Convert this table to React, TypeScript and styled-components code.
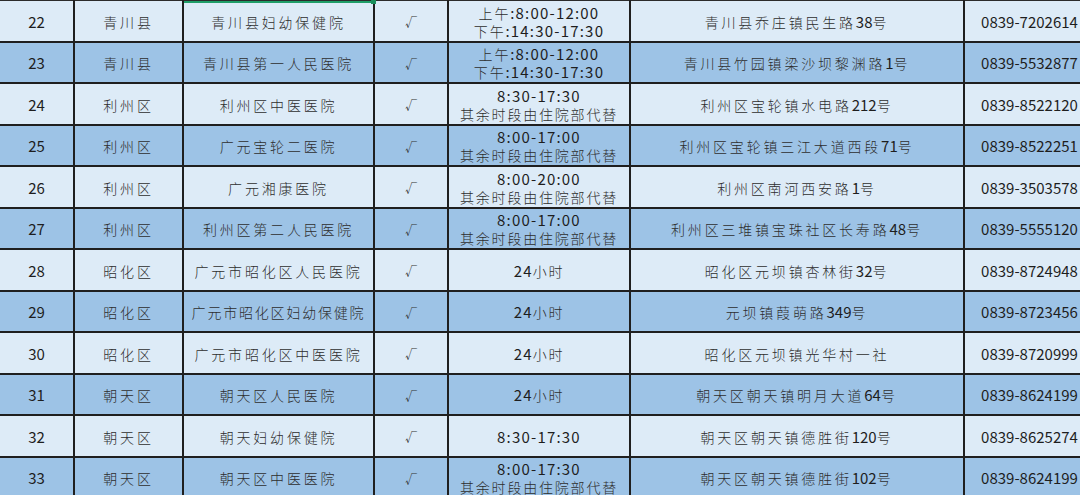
import React from 'react';
import styled, { createGlobalStyle } from 'styled-components';

const GlobalStyle = createGlobalStyle`
  html, body {
    margin: 0;
    padding: 0;
    overflow: hidden;
    background: #ddebf7;
  }
  body {
    font-family: "Noto Sans CJK SC", "Liberation Sans", sans-serif;
  }
`;

const Sheet = styled.div`
  width: 1080px;
  height: 495px;
  overflow: hidden;
`;

const Table = styled.table`
  border-collapse: collapse;
  table-layout: fixed;
  width: 1096px;
  margin-left: -2px;
  margin-top: -1px;
`;

const Row = styled.tr<{ $shade: boolean }>`
  height: 41.5px;
  background: ${(p) => (p.$shade ? '#9dc3e6' : '#ddebf7')};
`;

const Cell = styled.td<{ $selected?: boolean }>`
  position: relative;
  padding: 2px 0 0;
  border: 2px solid #1f1f1f;
  border-top-color: #2b2b2b;
  text-align: center;
  vertical-align: middle;
  white-space: nowrap;
  overflow: hidden;
  color: #1e1e1e;
  font-size: 15px;
  line-height: 18px;

  ${(p) =>
    p.$selected &&
    `
    overflow: visible;
    &::before {
      content: '';
      position: absolute;
      left: 0;
      right: 0;
      top: 0;
      height: 2px;
      background: #1f9e68;
    }
    &::after {
      content: '';
      position: absolute;
      right: -3px;
      top: -1px;
      width: 5px;
      height: 4px;
      background: #1a8f5c;
    }
  `}
`;

const TimeCell = styled(Cell)`
  letter-spacing: 1.2px;
`;

const TimeLine = styled.div`
  height: 18px;
  line-height: 18px;
`;

const Han = styled.span<{ $tight?: boolean }>`
  font-size: 14px;
  font-weight: 300;
  letter-spacing: ${(p) => (p.$tight ? '1.8px' : '2.8px')};
  color: #2e2e2e;
`;

const Check = styled.span`
  font-size: 12px;
  color: #333;
`;

const Txt: React.FC<{ text: string; tight?: boolean }> = ({ text, tight }) => (
  <>
    {text.split(/([\u4e00-\u9fff]+)/).map((part, i) =>
      /[\u4e00-\u9fff]/.test(part) ? (
        <Han key={i} $tight={tight}>
          {part}
        </Han>
      ) : (
        part
      )
    )}
  </>
);

const AM = ['上午:8:00-12:00', '下午:14:30-17:30'];
const rest = (t: string) => [t, '其余时段由住院部代替'];

const rows: [number, string, string, string[], string, string][] = [
  [22, '青川县', '青川县妇幼保健院', AM, '青川县乔庄镇民生路38号', '0839-7202614'],
  [23, '青川县', '青川县第一人民医院', AM, '青川县竹园镇梁沙坝黎渊路1号', '0839-5532877'],
  [24, '利州区', '利州区中医医院', rest('8:30-17:30'), '利州区宝轮镇水电路212号', '0839-8522120'],
  [25, '利州区', '广元宝轮二医院', rest('8:00-17:00'), '利州区宝轮镇三江大道西段71号', '0839-8522251'],
  [26, '利州区', '广元湘康医院', rest('8:00-20:00'), '利州区南河西安路1号', '0839-3503578'],
  [27, '利州区', '利州区第二人民医院', rest('8:00-17:00'), '利州区三堆镇宝珠社区长寿路48号', '0839-5555120'],
  [28, '昭化区', '广元市昭化区人民医院', ['24小时'], '昭化区元坝镇杏林街32号', '0839-8724948'],
  [29, '昭化区', '广元市昭化区妇幼保健院', ['24小时'], '元坝镇葭萌路349号', '0839-8723456'],
  [30, '昭化区', '广元市昭化区中医医院', ['24小时'], '昭化区元坝镇光华村一社', '0839-8720999'],
  [31, '朝天区', '朝天区人民医院', ['24小时'], '朝天区朝天镇明月大道64号', '0839-8624199'],
  [32, '朝天区', '朝天妇幼保健院', ['8:30-17:30'], '朝天区朝天镇德胜街120号', '0839-8625274'],
  [33, '朝天区', '朝天区中医医院', rest('8:00-17:30'), '朝天区朝天镇德胜街102号', '0839-8624199'],
];

const widths = [75, 109, 191, 74, 182, 334, 131];

const App: React.FC = () => (
  <>
    <GlobalStyle />
    <Sheet>
      <Table>
        <colgroup>
          {widths.map((w, i) => (
            <col key={i} style={{ width: w }} />
          ))}
        </colgroup>
        <tbody>
          {rows.map(([no, area, name, hours, addr, phone], idx) => (
            <Row key={no} $shade={idx % 2 === 1}>
              <Cell>{no}</Cell>
              <Cell>
                <Txt text={area} />
              </Cell>
              <Cell $selected={idx === 0}>
                <Txt text={name} tight={name.length > 10} />
              </Cell>
              <Cell>
                <Check>√</Check>
              </Cell>
              <TimeCell>
                {hours.map((h, i) => (
                  <TimeLine key={i}>
                    <Txt text={h} tight />
                  </TimeLine>
                ))}
              </TimeCell>
              <Cell>
                <Txt text={addr} />
              </Cell>
              <Cell>{phone}</Cell>
            </Row>
          ))}
        </tbody>
      </Table>
    </Sheet>
  </>
);

export default App;
